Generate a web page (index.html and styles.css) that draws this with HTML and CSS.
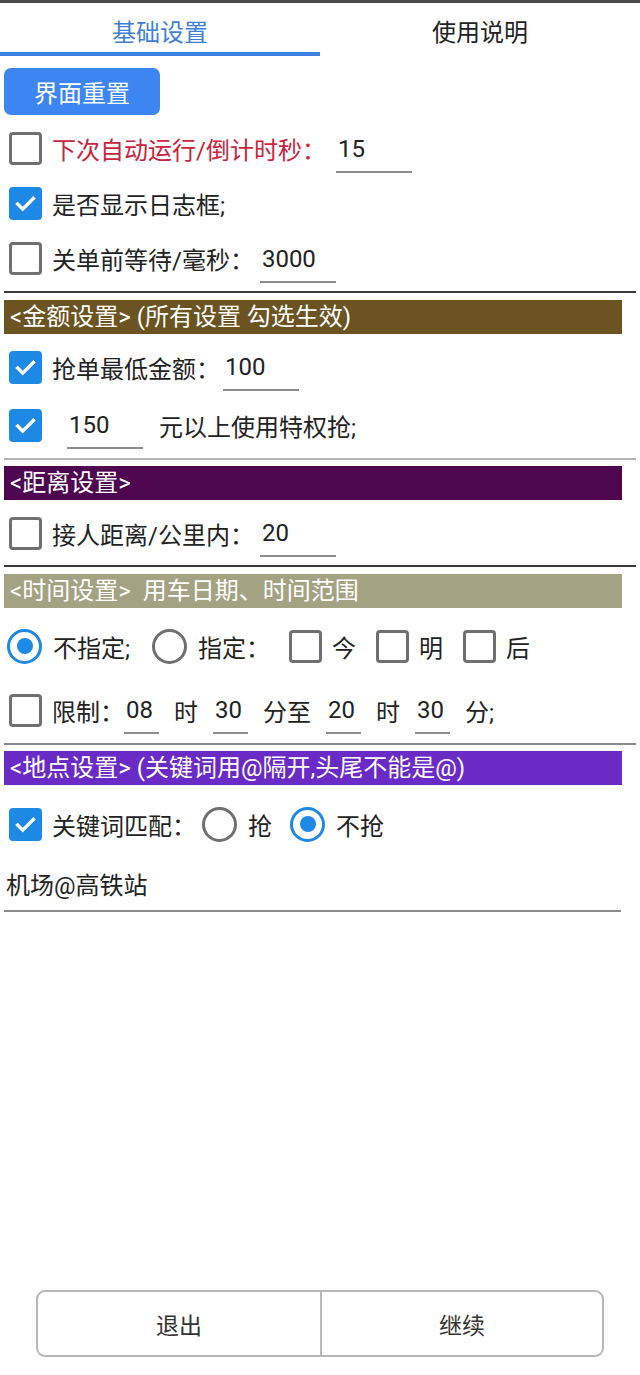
FILE: index.html
```html
<!DOCTYPE html>
<html lang="zh-CN">
<head>
    <meta charset="UTF-8">
    <meta name="viewport" content="width=device-width, initial-scale=1.0">
    <title>基础设置</title>
    <link rel="stylesheet" href="styles.css">
</head>
<body>
    <div class="topbar"></div>
    <div class="tabs">
        <div class="tab active">基础设置</div>
        <div class="tab">使用说明</div>
    </div>

    <div class="content">
        <button class="reset-btn">界面重置</button>

        <div class="row r55 first">
            <span class="box"></span>
            <span class="lbl red">下次自动运行/倒计时秒：</span>
            <span class="field f10">15</span>
        </div>
        <div class="row r55">
            <span class="box on"><svg viewBox="0 0 24 24"><path d="M5 12.5l4.5 4.5L19 7.5"/></svg></span>
            <span class="lbl">是否显示日志框;</span>
        </div>
        <div class="row r55">
            <span class="box"></span>
            <span class="lbl">关单前等待/毫秒：</span>
            <span class="field f6">3000</span>
        </div>
        <div class="divider dark d5"></div>

        <div class="header brown">&lt;金额设置&gt; (所有设置 勾选生效)</div>
        <div class="row r58 mt4">
            <span class="box on"><svg viewBox="0 0 24 24"><path d="M5 12.5l4.5 4.5L19 7.5"/></svg></span>
            <span class="lbl">抢单最低金额：</span>
            <span class="field f3">100</span>
        </div>
        <div class="row r58">
            <span class="box on"><svg viewBox="0 0 24 24"><path d="M5 12.5l4.5 4.5L19 7.5"/></svg></span>
            <span class="field lead">150</span>
            <span class="lbl after">元以上使用特权抢;</span>
        </div>
        <div class="divider light d4"></div>

        <div class="header plum">&lt;距离设置&gt;</div>
        <div class="row r56 mt5">
            <span class="box"></span>
            <span class="lbl">接人距离/公里内：</span>
            <span class="field f6">20</span>
        </div>
        <div class="divider dark d4"></div>

        <div class="header khaki">&lt;时间设置&gt;&nbsp; 用车日期、时间范围</div>
        <div class="row r64 mt6">
            <span class="radio on"></span>
            <span class="lbl">不指定;</span>
            <span class="radio sp22"></span>
            <span class="lbl">指定：</span>
            <span class="box sp19"></span>
            <span class="lbl">今</span>
            <span class="box sp20"></span>
            <span class="lbl">明</span>
            <span class="box sp20"></span>
            <span class="lbl">后</span>
        </div>
        <div class="row r64">
            <span class="box"></span>
            <span class="lbl">限制：</span>
            <span class="field small">08</span>
            <span class="lbl unit">时</span>
            <span class="field small">30</span>
            <span class="lbl unit">分至</span>
            <span class="field small">20</span>
            <span class="lbl unit">时</span>
            <span class="field small">30</span>
            <span class="lbl unit">分;</span>
        </div>
        <div class="divider mid d1"></div>

        <div class="header violet">&lt;地点设置&gt; (关键词用@隔开,头尾不能是@)</div>
        <div class="row r56 mt11">
            <span class="box on"><svg viewBox="0 0 24 24"><path d="M5 12.5l4.5 4.5L19 7.5"/></svg></span>
            <span class="lbl">关键词匹配：</span>
            <span class="radio sp6"></span>
            <span class="lbl">抢</span>
            <span class="radio on sp18"></span>
            <span class="lbl">不抢</span>
        </div>
        <div class="keywords">机场@高铁站</div>
    </div>

    <div class="footer">
        <div class="foot-btn">退出</div>
        <div class="foot-btn">继续</div>
    </div>
</body>
</html>
```

FILE: styles.css
```css
body {
    margin: 0;
    min-height: 100vh;
    display: flex;
    flex-direction: column;
    font-family: Roboto, "Noto Sans CJK SC", sans-serif;
    font-size: 24px;
    color: #222;
    background-color: #fff;
}
.topbar {
    height: 3px;
    background-color: #4a4a4a;
}
.tabs {
    display: flex;
}
.tab {
    flex: 1;
    height: 53px;
    box-sizing: border-box;
    padding-top: 12px;
    line-height: 37px;
    text-align: center;
    color: #222;
    border-bottom: 4px solid transparent;
}
.tab.active {
    color: #3f7fd4;
    border-bottom-color: #3d80e2;
}
.content {
    padding: 0 4px;
}
.reset-btn {
    display: block;
    margin-top: 12px;
    width: 156px;
    height: 47px;
    border: none;
    border-radius: 7px;
    background-color: #3d86f2;
    color: #fff;
    font-family: inherit;
    font-size: 24px;
    padding: 0;
}
.row {
    display: flex;
    align-items: center;
    padding-left: 5px;
}
.r55 { height: 55px; }
.r56 { height: 56px; }
.r58 { height: 58px; }
.r64 { height: 64px; }
.first { margin-top: 6px; }
.mt4 { margin-top: 4px; }
.mt5 { margin-top: 5px; }
.mt6 { margin-top: 6px; }
.mt11 { margin-top: 11px; }

.box {
    flex: none;
    width: 33px;
    height: 33px;
    box-sizing: border-box;
    border: 3px solid #707070;
    border-radius: 4px;
    margin-right: 10px;
    display: flex;
    align-items: center;
    justify-content: center;
}
.box.on {
    background-color: #1e88e5;
    border-color: #1e88e5;
}
.box svg {
    width: 27px;
    height: 27px;
    fill: none;
    stroke: #fff;
    stroke-width: 3;
    stroke-linecap: square;
}
.radio {
    flex: none;
    width: 35px;
    height: 35px;
    box-sizing: border-box;
    border: 3.5px solid #707070;
    border-radius: 50%;
    margin-left: -2px;
    margin-right: 11px;
    display: flex;
    align-items: center;
    justify-content: center;
}
.radio.on {
    border-color: #1e88e5;
}
.radio.on::after {
    content: "";
    width: 16px;
    height: 16px;
    border-radius: 50%;
    background-color: #1e88e5;
}
.sp6 { margin-left: 6px; }
.sp18 { margin-left: 18px; }
.sp19 { margin-left: 19px; }
.sp20 { margin-left: 20px; }
.sp22 { margin-left: 22px; }

.lbl {
    white-space: nowrap;
}
.lbl.red {
    color: #c8243e;
}
.lbl.after {
    margin-left: 16px;
}
.lbl.unit {
    margin: 0 15px;
}
.field {
    flex: none;
    width: 76px;
    box-sizing: border-box;
    padding: 8px 0 6px 2px;
    line-height: 32px;
    border-bottom: 2px solid #8c8c8c;
    white-space: nowrap;
}
.f3 { margin-left: 3px; }
.f6 { margin-left: 6px; }
.f10 { margin-left: 10px; }
.field.lead {
    margin-left: 15px;
    padding-left: 2px;
}
.field.small {
    width: 35px;
}

.divider {
    height: 2px;
}
.divider.dark { background-color: #3c3c3c; }
.divider.mid { background-color: #8a8a8a; }
.divider.light { background-color: #b4b4b4; }
.d1 { margin-top: 1px; }
.d4 { margin-top: 4px; }
.d5 { margin-top: 5px; }

.header {
    margin-top: 7px;
    margin-right: 14px;
    height: 34px;
    line-height: 34px;
    padding-left: 6px;
    color: #fff;
    white-space: nowrap;
}
.d4 + .header,
.d1 + .header {
    margin-top: 6px;
}
.dark.d4 + .header {
    margin-top: 7px;
}
.header.brown { background-color: #6b5322; }
.header.plum { background-color: #4e0651; }
.header.khaki { background-color: #a3a283; }
.header.violet { background-color: #6a2ac6; }

.keywords {
    margin-right: 15px;
    padding: 14px 0 4px 2px;
    line-height: 40px;
    border-bottom: 2px solid #8c8c8c;
}

.footer {
    margin: auto 36px 18px;
    height: 67px;
    box-sizing: border-box;
    border: 2px solid #b8b8b8;
    border-radius: 9px;
    display: grid;
    grid-template-columns: 1fr 1fr;
}
.foot-btn {
    display: flex;
    align-items: center;
    justify-content: center;
    color: #333;
    font-size: 23px;
}
.foot-btn + .foot-btn {
    border-left: 2px solid #b8b8b8;
}
```
